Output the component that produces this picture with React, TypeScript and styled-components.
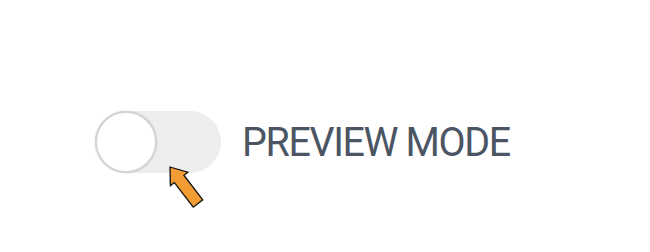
import React from "react";
import styled, { createGlobalStyle } from "styled-components";

const Global = createGlobalStyle`
  html, body { margin: 0; padding: 0; background: #ffffff; }
  body { width: 650px; height: 252px; overflow: hidden; }
`;

const Page = styled.div`
  padding: 111px 0 0 95px;
`;

const Row = styled.div`
  display: flex;
  align-items: center;
  gap: 21px;
`;

const ToggleWrap = styled.div`
  position: relative;
  width: 126px;
  height: 62px;
`;

const Track = styled.div`
  width: 126px;
  height: 62px;
  border-radius: 31px;
  background: #eeeeee;
  display: flex;
  align-items: center;
`;

const Knob = styled.div`
  width: 58px;
  height: 58px;
  border-radius: 50%;
  background: #ffffff;
  border: 2px solid #d4d4d4;
  box-shadow: 0 0 2px rgba(0, 0, 0, 0.15);
`;

const Pointer = styled.svg`
  position: absolute;
  left: 60px;
  top: 50px;
  overflow: visible;
`;

const Label = styled.span`
  font-family: Roboto, "Liberation Sans", sans-serif;
  font-size: 41px;
  font-weight: 400;
  color: #4b5563;
  letter-spacing: -1.4px;
  transform: scaleX(0.96);
  transform-origin: left center;
`;

export default function App() {
  return (
    <>
      <Global />
      <Page>
        <Row>
          <ToggleWrap>
            <Track>
              <Knob />
            </Track>
            <Pointer width="60" height="60" viewBox="0 0 60 60">
              <polygon
                points="0,0 11,15 6,15 6,46 -6,46 -6,15 -11,15"
                transform="translate(15,6) rotate(-37.5)"
                fill="#f39c33"
                stroke="#111"
                strokeWidth="1.3"
                strokeLinejoin="miter"
              />
            </Pointer>
          </ToggleWrap>
          <Label>PREVIEW MODE</Label>
        </Row>
      </Page>
    </>
  );
}
